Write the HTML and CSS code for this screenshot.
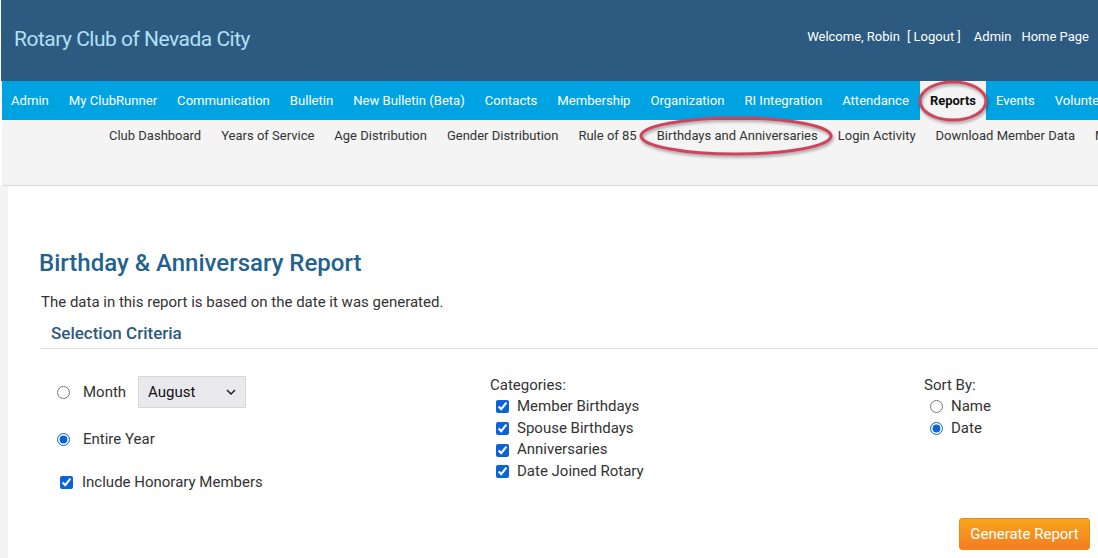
FILE: index.html
```html
<!DOCTYPE html>
<html lang="en">
<head>
    <meta charset="UTF-8">
    <meta name="viewport" content="width=device-width, initial-scale=1.0">
    <title>Birthday &amp; Anniversary Report - Rotary Club of Nevada City</title>
    <link rel="stylesheet" href="styles.css">
</head>
<body>
    <div class="page">
        <header class="topbar">
            <div class="club-name">Rotary Club of Nevada City</div>
            <div class="user-links">
                <span>Welcome, Robin</span>
                <span class="logout">[ Logout ]</span>
                <a href="#">Admin</a>
                <a href="#">Home Page</a>
            </div>
        </header>

        <nav class="main-nav">
            <a href="#">Admin</a>
            <a href="#">My ClubRunner</a>
            <a href="#">Communication</a>
            <a href="#">Bulletin</a>
            <a href="#">New Bulletin (Beta)</a>
            <a href="#">Contacts</a>
            <a href="#">Membership</a>
            <a href="#">Organization</a>
            <a href="#">RI Integration</a>
            <a href="#">Attendance</a>
            <a href="#" class="active">Reports</a>
            <a href="#">Events</a>
            <a href="#">Volunteers</a>
        </nav>

        <nav class="sub-nav">
            <a href="#">Club Dashboard</a>
            <a href="#">Years of Service</a>
            <a href="#">Age Distribution</a>
            <a href="#">Gender Distribution</a>
            <a href="#">Rule of 85</a>
            <a href="#">Birthdays and Anniversaries</a>
            <a href="#">Login Activity</a>
            <a href="#">Download Member Data</a>
            <a href="#">More</a>
        </nav>

        <div class="content-wrap">
            <main class="content">
                <h1 class="report-title">Birthday &amp; Anniversary Report</h1>
                <p class="report-note">The data in this report is based on the date it was generated.</p>
                <h2 class="section-title">Selection Criteria</h2>

                <div class="criteria">
                    <div class="criteria-col period">
                        <div class="month-row">
                            <label class="opt"><input type="radio" name="period"> Month</label>
                            <div class="select-box">
                                <span>August</span>
                                <svg width="10" height="6" viewBox="0 0 10 6"><path d="M1 1l4 4 4-4" fill="none" stroke="#222" stroke-width="1.5"/></svg>
                            </div>
                        </div>
                        <label class="opt year-row"><input type="radio" name="period" checked> Entire Year</label>
                        <label class="opt honorary-row"><input type="checkbox" checked> Include Honorary Members</label>
                    </div>

                    <div class="criteria-col">
                        <div class="col-label">Categories:</div>
                        <label class="opt item"><input type="checkbox" checked> Member Birthdays</label>
                        <label class="opt item"><input type="checkbox" checked> Spouse Birthdays</label>
                        <label class="opt item"><input type="checkbox" checked> Anniversaries</label>
                        <label class="opt item"><input type="checkbox" checked> Date Joined Rotary</label>
                    </div>

                    <div class="criteria-col">
                        <div class="col-label">Sort By:</div>
                        <label class="opt item"><input type="radio" name="sort"> Name</label>
                        <label class="opt item"><input type="radio" name="sort" checked> Date</label>
                    </div>
                </div>

                <div class="actions">
                    <button type="button" class="btn-generate">Generate Report</button>
                </div>
            </main>
        </div>

        <!-- red callout rings from the annotated screenshot -->
        <svg class="callout callout-reports" width="76" height="48" viewBox="0 0 76 48">
            <ellipse cx="37" cy="22" rx="33" ry="19" />
        </svg>
        <svg class="callout callout-bdays" width="202" height="48" viewBox="0 0 202 48">
            <ellipse cx="100" cy="21" rx="95" ry="18" />
        </svg>
    </div>
</body>
</html>
```

FILE: styles.css
```css
* {
    margin: 0;
    padding: 0;
    box-sizing: border-box;
}

body {
    font-family: Roboto, "Liberation Sans", sans-serif;
    background: #fff;
    color: #333;
}

a {
    text-decoration: none;
    color: inherit;
}

.page {
    position: relative;
    width: 1098px;
    height: 558px;
    overflow: hidden;
}

/* header */

.topbar {
    height: 81px;
    margin-left: 1px;
    background: #2d5a80;
    display: flex;
    align-items: center;
    justify-content: space-between;
    padding: 0 9px 0 13px;
}

.club-name {
    color: #aee0f6;
    font-size: 21px;
    letter-spacing: -0.5px;
    margin-top: -3px;
}

.user-links {
    display: flex;
    gap: 10px;
    color: #fff;
    font-size: 13px;
    margin-top: -8px;
}

.user-links .logout {
    margin-left: -3px;
    margin-right: 3px;
}

/* navigation */

.main-nav {
    margin-left: 2px;
    height: 39px;
    background: #00a3e2;
    display: flex;
    white-space: nowrap;
}

.main-nav a {
    color: #fff;
    font-size: 13.1px;
    line-height: 39px;
    padding: 0 10px 0 9px;
    margin-right: 1px;
}

.main-nav a.active {
    background: #f4f4f4;
    color: #111;
    font-size: 13px;
    font-weight: bold;
    padding: 0 10px;
}

.sub-nav {
    margin-left: 2px;
    height: 66px;
    background: #f4f4f4;
    border-bottom: 1px solid #dcdcdc;
    display: flex;
    white-space: nowrap;
    padding-left: 97px;
}

.sub-nav a {
    color: #333;
    font-size: 13px;
    line-height: 31px;
    padding: 0 10px;
}

/* content */

.content-wrap {
    background: #f4f4f4;
    padding-left: 8px;
}

.content {
    background: #fff;
    min-height: 380px;
    padding: 62px 0 0 31px;
}

.report-title {
    color: #23628f;
    font-size: 24px;
    font-weight: 500;
    line-height: 30px;
}

.report-note {
    font-size: 15px;
    line-height: 22px;
    margin: 13px 0 0 2px;
}

.section-title {
    color: #2d5a80;
    font-size: 17px;
    font-weight: 500;
    line-height: 22px;
    margin: 9px 0 0 2px;
    padding: 0 0 4px 10px;
    border-bottom: 1px solid #ddd;
}

.criteria {
    display: grid;
    grid-template-columns: 433px 434px 300px;
    margin-top: 26px;
    padding-left: 18px;
    font-size: 15px;
}

.opt {
    display: flex;
    align-items: center;
    color: #333;
}

.opt input {
    margin: 0;
    width: 13px;
    height: 13px;
    accent-color: #0b63d8;
}

.period .month-row {
    display: flex;
    align-items: center;
    height: 34px;
}

.period .opt {
    gap: 13px;
}

.select-box {
    margin-left: 12px;
    width: 108px;
    height: 32px;
    background: #e9e9ed;
    border: 1px solid #d6d6d6;
    display: flex;
    align-items: center;
    justify-content: space-between;
    padding: 0 9px 0 9px;
    color: #111;
}

.year-row {
    line-height: 21px;
    margin-top: 20px;
}

.period .honorary-row {
    line-height: 21px;
    margin-top: 22px;
    padding-left: 3px;
    gap: 9px;
}

.col-label {
    line-height: 21px;
}

.item {
    line-height: 21.7px;
    padding-left: 6px;
    gap: 8px;
}

.actions {
    display: flex;
    justify-content: flex-end;
    padding-right: 8px;
    margin-top: 25px;
}

.btn-generate {
    width: 131px;
    height: 32px;
    border: 1px solid #ee8a1c;
    border-radius: 3px;
    background: linear-gradient(#f8a51b, #f37d21);
    color: #fff;
    font-family: inherit;
    font-size: 15px;
}

/* callouts */

.callout {
    position: absolute;
    overflow: visible;
}

.callout ellipse {
    fill: none;
    stroke: #d3425b;
    stroke-width: 3;
    filter: drop-shadow(1px 2px 1.5px rgba(0, 0, 0, 0.35));
}

.callout-reports {
    left: 916px;
    top: 79px;
}

.callout-bdays {
    left: 636px;
    top: 115px;
}
```
